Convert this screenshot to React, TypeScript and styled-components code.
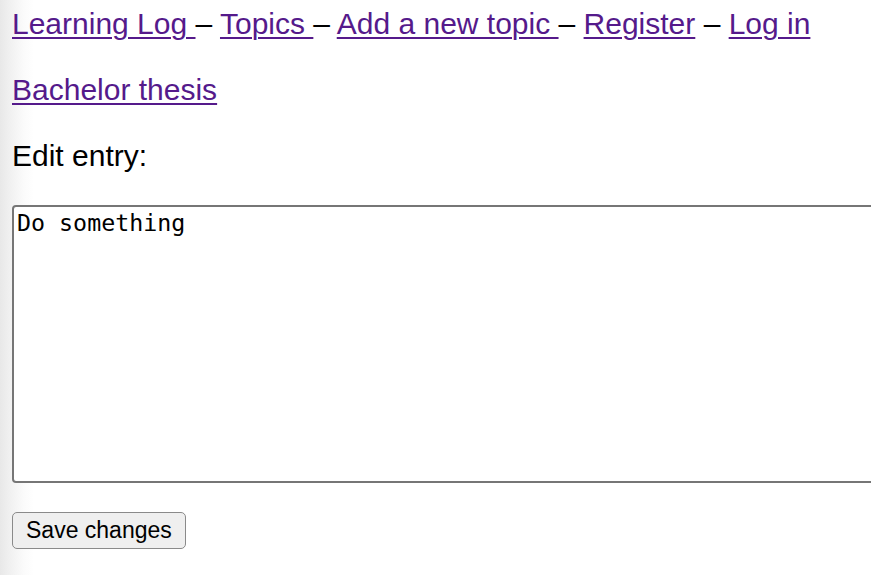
import React from "react";
import styled, { createGlobalStyle } from "styled-components";

const Global = createGlobalStyle`
  html, body { margin: 0; padding: 0; }
  body {
    background: linear-gradient(to right, #e8e8e8 0px, #efefef 8px, #fbfbfb 24px, #ffffff 34px);
    min-height: 575px;
    font-family: Helvetica, "Liberation Sans", Arial, sans-serif;
    color: #000;
    overflow: hidden;
  }
`;

const Page = styled.div`
  padding: 7px 0 0 12px;
  font-size: 30px;
`;

const Line = styled.p`
  margin: 0 0 33px 0;
  line-height: 33px;
  white-space: nowrap;
`;

const Link = styled.a`
  color: #551a8b;
  text-decoration: underline;
  text-decoration-thickness: 2px;
  text-underline-offset: 3px;
`;

const Sep = styled.span`
  color: #000;
`;

const Form = styled.form`
  margin-top: 32px;
  display: flex;
  flex-direction: column;
  align-items: flex-start;
`;

const TextArea = styled.textarea`
  box-sizing: border-box;
  width: 1000px;
  height: 278px;
  margin: 0;
  padding: 2px 3px;
  border: 2px solid #767676;
  border-radius: 4px;
  background: #fff;
  font-family: "DejaVu Sans Mono", "Liberation Mono", monospace;
  font-size: 23.3px;
  line-height: 28px;
  color: #000;
  resize: none;
  outline: none;
`;

const Button = styled.button`
  margin-top: 29px;
  box-sizing: border-box;
  height: 37px;
  padding: 0 13px;
  border: 1.5px solid #8a8a8a;
  border-radius: 5px;
  background: #efefef;
  font-family: Helvetica, "Liberation Sans", Arial, sans-serif;
  font-size: 23px;
  color: #000;
  cursor: pointer;
`;

export default function App() {
  return (
    <>
      <Global />
      <Page>
        <Line>
          <Link href="#">Learning Log </Link>
          <Sep> – </Sep>
          <Link href="#">Topics </Link>
          <Sep> – </Sep>
          <Link href="#">Add a new topic </Link>
          <Sep> – </Sep>
          <Link href="#">Register</Link>
          <Sep> – </Sep>
          <Link href="#">Log in</Link>
        </Line>
        <Line>
          <Link href="#">Bachelor thesis</Link>
        </Line>
        <Line>Edit entry:</Line>
        <Form onSubmit={(e) => e.preventDefault()}>
          <TextArea defaultValue="Do something" />
          <Button type="submit">Save changes</Button>
        </Form>
      </Page>
    </>
  );
}
